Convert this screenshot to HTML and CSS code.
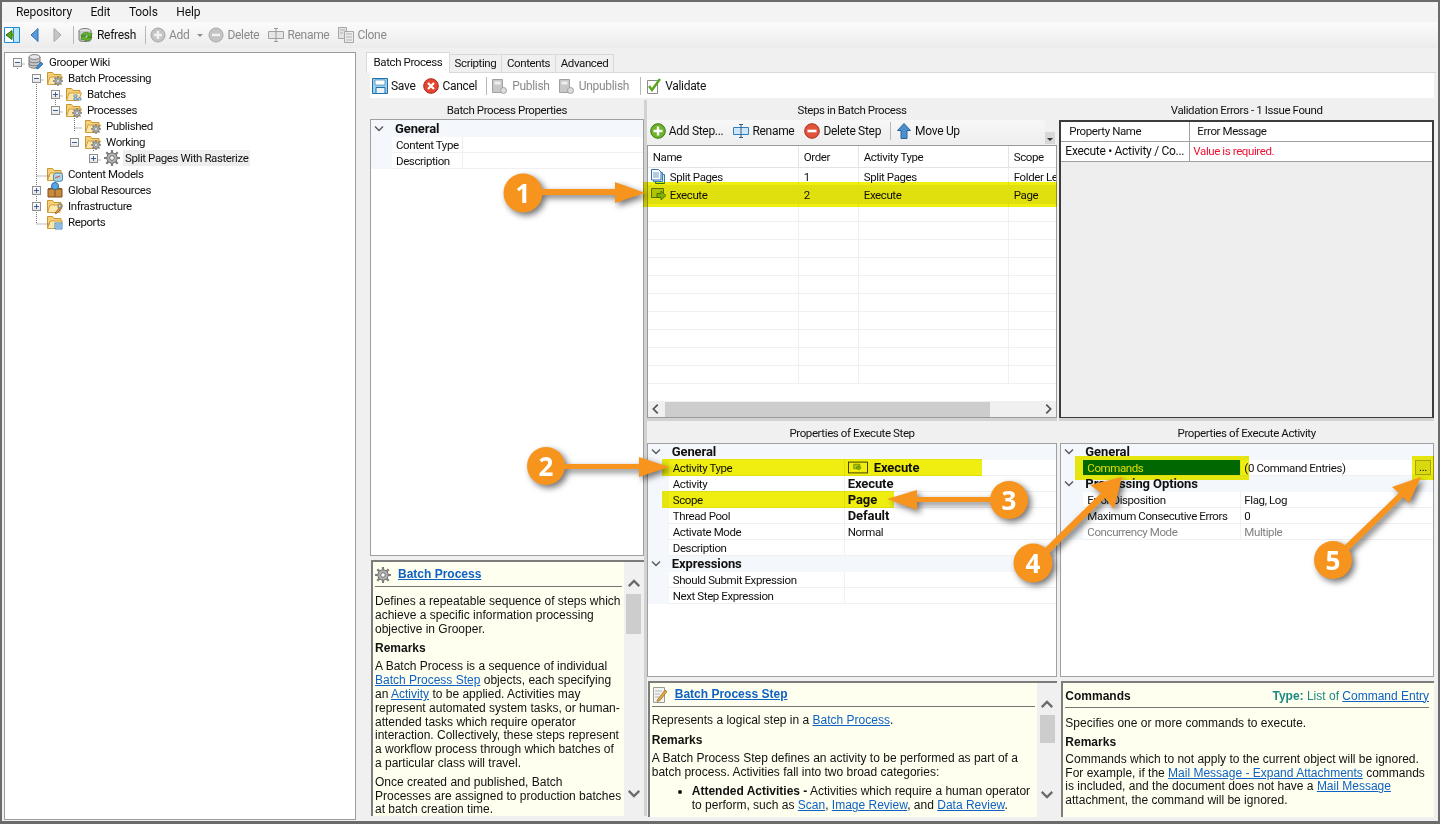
FILE: index.html
```html
<!DOCTYPE html>
<html lang="en">
<head>
<meta charset="utf-8">
<title>Grooper Design Studio</title>
<link rel="stylesheet" href="styles.css">
</head>
<body>
<svg class="defs" width="0" height="0" aria-hidden="true">
  <defs>
    <symbol id="folder" viewBox="0 0 16 16"><path d="M.5 14.500v-12h5l1.500 2h7v3" fill="#f7cf78" stroke="#c9962f"/><path d="M.5 14.500l2.500-7.500h12.500l-3 7.500z" fill="#fde7a8" stroke="#d0a040"/></symbol>
    <symbol id="gear" viewBox="0 0 16 16"><circle cx="8" cy="8" r="5.200" fill="#b4b4b4" stroke="#6f6f6f"/><path d="M8 0v3M8 13v3M0 8h3M13 8h3M2.300 2.300l2.100 2.100M11.600 11.600l2.100 2.100M13.700 2.300l-2.100 2.100M4.400 11.600l-2.100 2.100" stroke="#7d7d7d" stroke-width="2.200"/><circle cx="8" cy="8" r="2.300" fill="#fff" stroke="#6f6f6f"/></symbol>
    <symbol id="fgear" viewBox="0 0 16 16"><use href="#folder"/><use href="#gear" x="6" y="6" width="10" height="10"/></symbol>
    <symbol id="db" viewBox="0 0 16 16"><path d="M1 3v9c0 3 11 3 11 0V3z" fill="#c7c7c7" stroke="#7b7b7b"/><ellipse cx="6.500" cy="3" rx="5.500" ry="2.400" fill="#e9e9e9" stroke="#7b7b7b"/><path d="M1 6.500c0 3 11 3 11 0M1 9.500c0 3 11 3 11 0" fill="none" stroke="#7b7b7b"/><path d="M8 14l5-6 2 2-5 5z" fill="#3d8fd6" stroke="#1e5f9c" stroke-width=".7"/></symbol>
    <symbol id="fsmall" viewBox="0 0 16 16"><use href="#folder"/><path d="M8 9h3v2H8zM12 12h3v2h-3zM8 12h3v2H8z" fill="#e4eef8" stroke="#4a7fb0" stroke-width=".8"/></symbol>
    <symbol id="fmodel" viewBox="0 0 16 16"><use href="#folder"/><ellipse cx="11" cy="9" rx="4.500" ry="2" fill="#bfe0ee" stroke="#4f8fae"/><path d="M6.500 9v5c0 2 9 2 9 0V9" fill="#a9d3e6" stroke="#4f8fae"/><path d="M8 12l5-2" stroke="#d44"/></symbol>
    <symbol id="box" viewBox="0 0 16 16"><path d="M1 7l7-2 7 2v8H1z" fill="#c98a3c" stroke="#7a4f1c"/><path d="M1 7h14M8 7v8" stroke="#7a4f1c"/><circle cx="8" cy="4" r="3.500" fill="#5aa6e0" stroke="#2a6ea8"/></symbol>
    <symbol id="ftool" viewBox="0 0 16 16"><use href="#folder"/><path d="M8 15l5-6 2-1-1 3-5 5z" fill="#d99050" stroke="#8c5a28" stroke-width=".7"/><circle cx="13" cy="8" r="2" fill="none" stroke="#8f8f8f" stroke-width="1.300"/></symbol>
    <symbol id="freport" viewBox="0 0 16 16"><use href="#folder"/><path d="M8 9h7v6H8z" fill="#d9ecfa" stroke="#3f86bf"/><path d="M9 11h5M9 13h5" stroke="#3f86bf"/></symbol>
    <symbol id="plus" viewBox="0 0 16 16"><circle cx="8" cy="8" r="7" fill="#c4c4c4" stroke="#a8a8a8"/><path d="M8 4v8M4 8h8" stroke="#f2f2f2" stroke-width="2.400"/></symbol>
    <symbol id="minus" viewBox="0 0 16 16"><circle cx="8" cy="8" r="7" fill="#c4c4c4" stroke="#a8a8a8"/><path d="M4 8h8" stroke="#f2f2f2" stroke-width="2.400"/></symbol>
    <symbol id="rename" viewBox="0 0 16 16"><path d="M.5 4.500h15v7H.5z" fill="#e6e6e6" stroke="#a2a2a2"/><path d="M8 1.500v13M6 1.500h4M6 14.500h4" stroke="#9a9a9a" fill="none"/></symbol>
    <symbol id="renameb" viewBox="0 0 16 16"><path d="M.5 4.500h15v7H.5z" fill="#cfe6f8" stroke="#2f7fc0"/><path d="M8 1.500v13M6 1.500h4M6 14.500h4" stroke="#33607f" fill="none"/></symbol>
    <symbol id="pub" viewBox="0 0 16 16"><path d="M1.500 1.500h10v13h-10z" fill="#c8c8c8" stroke="#a0a0a0"/><path d="M3.500 3.500h6v3h-6z" fill="#efefef"/><circle cx="12.500" cy="12.500" r="3" fill="#dcdcdc" stroke="#a0a0a0"/></symbol>
    <symbol id="exec" viewBox="0 0 16 16"><path d="M.5 1.500h12v9H.5z" fill="#b9d15b" stroke="#5b7a1a"/><path d="M6 6.500h4V4l5 4.500-5 4.500v-2.500H6z" fill="#8dbd2a" stroke="#3d6b12" stroke-width=".8"/></symbol>
    <symbol id="pages" viewBox="0 0 16 16"><path d="M4.500 5.500h9v9h-9z" fill="#d6eef0" stroke="#33808c"/><path d="M2.500 3.500h9v9h-9z" fill="#e8f4fb" stroke="#3f7fb8"/><path d="M.5.500h7l2.500 2.500v8h-9.500z" fill="#fff" stroke="#2f6fb0"/><path d="M2 4h6M2 6h6M2 8h6" stroke="#6b9bc8"/></symbol>
    <symbol id="note" viewBox="0 0 16 16"><path d="M1.500.500h11v15h-11z" fill="#f4f4f4" stroke="#9a9a9a"/><path d="M3 4h7M3 7h5M3 10h4" stroke="#b5b5b5"/><path d="M6 12l7-9 2 1.500-7 9-3 1z" fill="#e7a93c" stroke="#8c6a20" stroke-width=".7"/></symbol>
    <symbol id="up" viewBox="0 0 16 10"><path d="M2 8l6-6 6 6" fill="none" stroke="#6a6a6a" stroke-width="2.600"/></symbol>
    <symbol id="down" viewBox="0 0 16 10"><path d="M2 2l6 6 6-6" fill="none" stroke="#6a6a6a" stroke-width="2.600"/></symbol>
    <symbol id="chev" viewBox="0 0 10 8"><path d="M1 1.500l4 4 4-4" fill="none" stroke="#595959" stroke-width="1.400"/></symbol>
  </defs>
</svg>

<div class="frame">
  <nav class="menu">
    <span class="menu-item">Repository</span>
    <span class="menu-item">Edit</span>
    <span class="menu-item">Tools</span>
    <span class="menu-item">Help</span>
  </nav>

  <div class="toolbar main-tools">
    <svg class="ico ico-nav" viewBox="0 0 16 16"><path d="M.5.500h15v15H.5z" fill="#fff" stroke="#1b8fd8"/><path d="M9.500.500h6v15h-6z" fill="#bfe3f7" stroke="#1b8fd8"/><path d="M8 3.500v9L2 8z" fill="#5aa51e" stroke="#2f6d0c"/><path d="M8 6.500h2v3H8z" fill="#5aa51e"/></svg>
    <svg class="ico nav-back" viewBox="0 0 16 16"><path d="M11 1.500v13L4 8z" fill="#5b9bdc" stroke="#2f6fae"/></svg>
    <svg class="ico nav-fwd" viewBox="0 0 16 16"><path d="M5 1.500v13L12 8z" fill="#c6c6c6" stroke="#a8a8a8"/></svg>
    <span class="sep sep-a"></span>
    <span class="tool t-refresh"><svg class="ico" viewBox="0 0 16 16"><ellipse cx="7" cy="4" rx="6" ry="2.500" fill="#e3e3e3" stroke="#7b7b7b"/><path d="M1 4v9c0 2 12 2 12 0V4" fill="#c9c9c9" stroke="#7b7b7b"/><path d="M3 9c1-4 7-5 9-2l2-1-1 5-4-1 2-1c-2-2-5-1-6 1zM14 10c-1 4-7 5-9 2l-2 1 1-5 4 1-2 1c2 2 5 1 6-1z" fill="#64b52a" stroke="#2f7a10" stroke-width=".6"/></svg>Refresh</span>
    <span class="sep sep-b"></span>
    <span class="tool off t-add"><svg class="ico" viewBox="0 0 16 16"><use href="#plus"/></svg>Add<i class="caret"></i></span>
    <span class="tool off t-del"><svg class="ico" viewBox="0 0 16 16"><use href="#minus"/></svg>Delete</span>
    <span class="tool off t-ren"><svg class="ico" viewBox="0 0 16 16"><use href="#rename"/></svg>Rename</span>
    <span class="tool off t-clone"><svg class="ico" viewBox="0 0 16 16"><path d="M.5.500h8v11h-8z" fill="#e4e4e4" stroke="#a6a6a6"/><path d="M6.500 4.500h9v11h-9z" fill="#ececec" stroke="#a6a6a6"/><path d="M2 3h5M2 6h3M8 7h6M8 10h6M8 13h6" stroke="#b0b0b0"/></svg>Clone</span>
  </div>

  <div class="main">
    <aside class="tree">
      <div class="row l0"><i class="exp minus"></i><svg class="ico"><use href="#db"/></svg><span class="lab">Grooper Wiki</span></div>
      <div class="row l1"><i class="exp minus"></i><svg class="ico"><use href="#fgear"/></svg><span class="lab">Batch Processing</span></div>
      <div class="row l2"><i class="exp plus"></i><svg class="ico"><use href="#fsmall"/></svg><span class="lab">Batches</span></div>
      <div class="row l2"><i class="exp minus"></i><svg class="ico"><use href="#fgear"/></svg><span class="lab">Processes</span></div>
      <div class="row l3"><i class="exp none"></i><svg class="ico"><use href="#fgear"/></svg><span class="lab">Published</span></div>
      <div class="row l3"><i class="exp minus"></i><svg class="ico"><use href="#fgear"/></svg><span class="lab">Working</span></div>
      <div class="row l4"><i class="exp plus"></i><svg class="ico"><use href="#gear"/></svg><span class="lab sel">Split Pages With Rasterize</span></div>
      <div class="row l1"><i class="exp none"></i><svg class="ico"><use href="#fmodel"/></svg><span class="lab">Content Models</span></div>
      <div class="row l1"><i class="exp plus"></i><svg class="ico"><use href="#box"/></svg><span class="lab">Global Resources</span></div>
      <div class="row l1"><i class="exp plus"></i><svg class="ico"><use href="#ftool"/></svg><span class="lab">Infrastructure</span></div>
      <div class="row l1"><i class="exp none"></i><svg class="ico"><use href="#freport"/></svg><span class="lab">Reports</span></div>
      <svg class="tree-lines" width="120" height="190" aria-hidden="true">
        <path d="M12.500 14v2M12.500 10h7M31.500 30v140M31.500 26h7M31.500 170h13M31.500 122h13M31.500 138h3M31.500 154h3M50.500 46v16M50.500 42h7M50.500 58h7M69.500 62v16M69.500 74h7M88.500 94v4M88.500 106h7" stroke="#777" stroke-dasharray="1 1" fill="none"/>
      </svg>
    </aside>

    <section class="work">
      <div class="tabs">
        <span class="tab active">Batch Process</span>
        <span class="tab t2">Scripting</span>
        <span class="tab t3">Contents</span>
        <span class="tab t4">Advanced</span>
      </div>
      <div class="toolbar work-tools">
        <span class="tool t-save"><svg class="ico" viewBox="0 0 16 16"><path d="M.5.500h15v15H.5z" fill="#9fd0ef" stroke="#1f6fa8"/><path d="M3 2h10v5H3z" fill="#fff" stroke="#1f6fa8" stroke-width=".6"/><path d="M4 9.500h9v6H4z" fill="#e8f3fb" stroke="#1f6fa8"/></svg>Save</span>
        <span class="tool t-cancel"><svg class="ico" viewBox="0 0 16 16"><circle cx="8" cy="8" r="7.300" fill="#e5452f" stroke="#a52a1a"/><path d="M5 5l6 6M11 5l-6 6" stroke="#fff" stroke-width="2.200"/></svg>Cancel</span>
        <span class="sep sep-c"></span>
        <span class="tool off t-pub"><svg class="ico" viewBox="0 0 16 16"><use href="#pub"/></svg>Publish</span>
        <span class="tool off t-unpub"><svg class="ico" viewBox="0 0 16 16"><use href="#pub"/></svg>Unpublish</span>
        <span class="sep sep-d"></span>
        <span class="tool t-val"><svg class="ico" viewBox="0 0 16 16"><path d="M1.500 2.500h10v13h-10z" fill="#fff" stroke="#8c8c8c"/><path d="M3 8l3 4 8-11" fill="none" stroke="#59a51e" stroke-width="2.400"/></svg>Validate</span>
      </div>

      <div class="cols">
        <div class="col col1">
          <h2 class="ttl t19">Batch Process Properties</h2>
          <div class="pg pg-a grow">
            <div class="pg-cat"><svg class="chev"><use href="#chev"/></svg><b>General</b></div>
            <div class="pg-row"><span class="gut"></span><span class="nm">Content Type</span><span class="vl"></span></div>
            <div class="pg-row"><span class="gut"></span><span class="nm">Description</span><span class="vl"></span></div>
          </div>
          <article class="help h-tall">
            <div class="help-body">
              <header class="help-head"><svg class="ico"><use href="#gear"/></svg><a class="help-title">Batch Process</a></header>
              <p>Defines a repeatable sequence of steps which achieve a specific information processing objective in Grooper.</p>
              <h3>Remarks</h3>
              <p>A Batch Process is a sequence of individual <a>Batch Process Step</a> objects, each specifying an <a>Activity</a> to be applied. Activities may represent automated system tasks, or human-attended tasks which require operator interaction. Collectively, these steps represent a workflow process through which batches of a particular class will travel.</p>
              <p>Once created and published, Batch Processes are assigned to production batches at batch creation time.</p>
            </div>
            <div class="vbar"><svg class="sb-arrow"><use href="#up"/></svg><span class="thumb th-tall"></span><svg class="sb-arrow sb-down"><use href="#down"/></svg></div>
          </article>
        </div>

        <div class="vsplit"></div>

        <div class="col col2">
          <h2 class="ttl">Steps in Batch Process</h2>
          <div class="toolbar steps-tools">
            <span class="tool t-addstep"><svg class="ico" viewBox="0 0 16 16"><circle cx="8" cy="8" r="7.300" fill="#6db42a" stroke="#3d7a12"/><path d="M8 3.500v9M3.500 8h9" stroke="#fff" stroke-width="2.400"/></svg>Add Step...</span>
            <span class="tool t-rename"><svg class="ico" viewBox="0 0 16 16"><use href="#renameb"/></svg>Rename</span>
            <span class="tool t-delstep"><svg class="ico" viewBox="0 0 16 16"><circle cx="8" cy="8" r="7.300" fill="#e2533c" stroke="#a83020"/><path d="M3.500 8h9" stroke="#fff" stroke-width="2.600"/></svg>Delete Step</span>
            <span class="sep sep-e"></span>
            <span class="tool t-move"><svg class="ico" viewBox="0 0 16 16"><path d="M8 .500l6.500 7H11v8H5v-8H1.500z" fill="#4a90cf" stroke="#2a6296"/></svg>Move Up</span>
            <span class="overflow"><i></i></span>
          </div>
          <div class="list">
            <div class="lrow lhead"><span class="c1">Name</span><span class="c2">Order</span><span class="c3">Activity Type</span><span class="c4">Scope</span></div>
            <div class="lrow"><span class="c1"><svg class="ico"><use href="#pages"/></svg>Split Pages</span><span class="c2">1</span><span class="c3">Split Pages</span><span class="c4">Folder Le</span></div>
            <div class="lrow lsel"><span class="c1"><svg class="ico"><use href="#exec"/></svg>Execute</span><span class="c2">2</span><span class="c3">Execute</span><span class="c4">Page</span></div>
            <div class="lrow"><span class="c1"></span><span class="c2"></span><span class="c3"></span><span class="c4"></span></div>
            <div class="lrow"><span class="c1"></span><span class="c2"></span><span class="c3"></span><span class="c4"></span></div>
            <div class="lrow"><span class="c1"></span><span class="c2"></span><span class="c3"></span><span class="c4"></span></div>
            <div class="lrow"><span class="c1"></span><span class="c2"></span><span class="c3"></span><span class="c4"></span></div>
            <div class="lrow"><span class="c1"></span><span class="c2"></span><span class="c3"></span><span class="c4"></span></div>
            <div class="lrow"><span class="c1"></span><span class="c2"></span><span class="c3"></span><span class="c4"></span></div>
            <div class="lrow"><span class="c1"></span><span class="c2"></span><span class="c3"></span><span class="c4"></span></div>
            <div class="lrow"><span class="c1"></span><span class="c2"></span><span class="c3"></span><span class="c4"></span></div>
            <div class="lrow"><span class="c1"></span><span class="c2"></span><span class="c3"></span><span class="c4"></span></div>
            <div class="lrow"><span class="c1"></span><span class="c2"></span><span class="c3"></span><span class="c4"></span></div>
            <div class="hbar"><svg class="ha" viewBox="0 0 16 16"><path d="M10 3L5 8l5 5" fill="none" stroke="#555" stroke-width="2"/></svg><span class="hthumb"></span><svg class="ha ha-end" viewBox="0 0 16 16"><path d="M6 3l5 5-5 5" fill="none" stroke="#555" stroke-width="2"/></svg></div>
          </div>
          <h2 class="ttl tsplit">Properties of Execute Step</h2>
          <div class="pg pg-b">
            <div class="pg-cat"><svg class="chev"><use href="#chev"/></svg><b>General</b></div>
            <div class="pg-row"><span class="gut"></span><span class="nm">Activity Type</span><span class="vl bold"><svg class="swatch" viewBox="0 0 24 14"><rect x=".5" y=".5" width="23" height="13" fill="none" stroke="#222"/><use href="#exec" x="6" y="2" width="11" height="10"/></svg>Execute</span></div>
            <div class="pg-row"><span class="gut"></span><span class="nm">Activity</span><span class="vl bold">Execute</span></div>
            <div class="pg-row"><span class="gut"></span><span class="nm">Scope</span><span class="vl bold">Page</span></div>
            <div class="pg-row"><span class="gut"></span><span class="nm">Thread Pool</span><span class="vl bold">Default</span></div>
            <div class="pg-row"><span class="gut"></span><span class="nm">Activate Mode</span><span class="vl">Normal</span></div>
            <div class="pg-row"><span class="gut"></span><span class="nm">Description</span><span class="vl"></span></div>
            <div class="pg-cat"><svg class="chev"><use href="#chev"/></svg><b>Expressions</b></div>
            <div class="pg-row"><span class="gut"></span><span class="nm">Should Submit Expression</span><span class="vl"></span></div>
            <div class="pg-row"><span class="gut"></span><span class="nm">Next Step Expression</span><span class="vl"></span></div>
          </div>
          <article class="help h-short">
            <div class="help-body">
              <header class="help-head"><svg class="ico"><use href="#note"/></svg><a class="help-title">Batch Process Step</a></header>
              <p>Represents a logical step in a <a>Batch Process</a>.</p>
              <h3>Remarks</h3>
              <p>A Batch Process Step defines an activity to be performed as part of a batch process. Activities fall into two broad categories:</p>
              <ul><li><b>Attended Activities -</b> Activities which require a human operator to perform, such as <a>Scan</a>, <a>Image Review</a>, and <a>Data Review</a>.</li></ul>
            </div>
            <div class="vbar"><svg class="sb-arrow"><use href="#up"/></svg><span class="thumb th-short"></span><svg class="sb-arrow sb-down"><use href="#down"/></svg></div>
          </article>
        </div>

        <div class="col col3">
          <h2 class="ttl">Validation Errors - 1 Issue Found</h2>
          <div class="errors">
            <div class="erow ehead"><span class="e1 epad">Property Name</span><span class="e2 epad">Error Message</span></div>
            <div class="erow"><span class="e1 e1-val">Execute • Activity / Co...</span><span class="e2 err">Value is required.</span></div>
          </div>
          <h2 class="ttl tsplit">Properties of Execute Activity</h2>
          <div class="pg pg-c">
            <div class="pg-cat"><svg class="chev"><use href="#chev"/></svg><b>General</b></div>
            <div class="pg-row"><span class="gut"></span><span class="nm nm-sel">Commands</span><span class="vl vl-btn">(0 Command Entries)<i class="dots">...</i></span></div>
            <div class="pg-cat"><svg class="chev"><use href="#chev"/></svg><b>Processing Options</b></div>
            <div class="pg-row"><span class="gut"></span><span class="nm">Error Disposition</span><span class="vl">Flag, Log</span></div>
            <div class="pg-row"><span class="gut"></span><span class="nm">Maximum Consecutive Errors</span><span class="vl">0</span></div>
            <div class="pg-row dim"><span class="gut"></span><span class="nm">Concurrency Mode</span><span class="vl">Multiple</span></div>
          </div>
          <article class="help h-short">
            <div class="help-body h-cmd">
              <header class="help-head cmd-head"><b>Commands</b><span class="type"><b>Type:</b> List of <a>Command Entry</a></span></header>
              <p>Specifies one or more commands to execute.</p>
              <h3>Remarks</h3>
              <p>Commands which to not apply to the current object will be ignored. For example, if the <a>Mail Message - Expand Attachments</a> commands is included, and the document does not have a <a>Mail Message</a> attachment, the command will be ignored.</p>
            </div>
          </article>
        </div>
      </div>
    </section>
  </div>
</div>

<div class="hl hl-1"></div>
<div class="hl hl-2"></div>
<div class="hl hl-3"></div>
<div class="hl hl-4"></div>
<div class="hl hl-5"></div>

<svg class="annot" width="1440" height="824" viewBox="0 0 1440 824" aria-hidden="true">
  <g class="arrow">
    <path d="M538 189H615V182L645 193 615 203V195H538z"/>
    <circle cx="523" cy="193" r="19.500"/>
  </g>
  <text class="num" x="523" y="203">1</text>
  <g class="arrow">
    <path d="M560 464H639V457L669 467 639 477V469H560z"/>
    <circle cx="546" cy="466" r="19"/>
  </g>
  <text class="num" x="546" y="476">2</text>
  <g class="arrow">
    <path d="M995 497H917V490L887 499 917 510V502H995z"/>
    <circle cx="1009" cy="500" r="19"/>
  </g>
  <text class="num" x="1009" y="510">3</text>
  <g class="arrow">
    <path d="M1044 549L1101 493 1090 485 1122 477 1114 509 1105 498 1048 554z"/>
    <circle cx="1033" cy="563" r="19.500"/>
  </g>
  <text class="num" x="1033" y="573">4</text>
  <g class="arrow">
    <path d="M1344 546L1399 493 1392 487 1421 477 1409 503 1403 497 1348 551z"/>
    <circle cx="1333" cy="560" r="19"/>
  </g>
  <text class="num" x="1333" y="570">5</text>
</svg>
</body>
</html>
```
FILE: styles.css
```css
* { box-sizing: border-box; }
html, body { margin: 0; padding: 0; }
body {
  position: relative;
  width: 1440px;
  height: 824px;
  overflow: hidden;
  font: 12px/16px Roboto, "Liberation Sans", sans-serif;
  letter-spacing: -.3px;
  color: #111;
  background: #f0f0f0;
}
.defs { position: absolute; }
.frame {
  width: 1440px;
  height: 824px;
  border: 2px solid #6b6b6b;
  border-bottom-width: 3px;
  display: flex;
  flex-direction: column;
  background: #f0f0f0;
}
.ico { width: 16px; height: 16px; flex: none; display: block; }
.tree, .ttl, .pg, .list, .errors, .tabs { font-size: 11.5px; letter-spacing: -.4px; }

/* menu */
.menu { height: 20px; display: flex; align-items: center; padding-left: 14px; gap: 18.500px; background: #f3f3f3; letter-spacing: -.1px; }

/* toolbars */
.toolbar { display: flex; align-items: center; }
.tool { display: flex; align-items: center; gap: 3px; white-space: nowrap; }
.tool.off { color: #8a8a8a; }
.sep { width: 1px; height: 18px; background: #b8b8b8; flex: none; }
.main-tools { height: 26px; padding-left: 2px; background: linear-gradient(#fbfbfb, #ececec); }
.nav-back { margin-left: 7px; }
.nav-fwd { margin-left: 6px; }
.sep-a { margin-left: 8px; }
.t-refresh { margin-left: 4px; }
.sep-b { margin-left: 9px; }
.t-add { margin-left: 4px; }
.caret { width: 0; height: 0; border: 3px solid transparent; border-top: 3px solid #8f8f8f; border-bottom: 0; margin-left: 5px; }
.t-del { margin-left: 5px; }
.t-ren { margin-left: 9px; }
.t-clone { margin-left: 9px; }

/* layout */
.main { flex: 1; display: flex; min-height: 0; padding: 2px 0 0 2px; }
.tree {
  position: relative;
  width: 352px;
  height: 768px;
  margin-top: 2px;
  border: 1px solid #9c9c9c;
  background: #fff;
  padding: 1px 0 0 8px;
}
.work { margin-left: 10px; width: 1070px; display: flex; flex-direction: column; }

/* tree */
.row { height: 16px; display: flex; align-items: center; white-space: nowrap; }
.l1 { padding-left: 19px; }
.l2 { padding-left: 38px; }
.l3 { padding-left: 57px; }
.l4 { padding-left: 76px; }
.exp { width: 9px; height: 9px; flex: none; margin-right: 6px; position: relative; background: #fff; z-index: 1; }
.exp.minus, .exp.plus { border: 1px solid #8e8e8e; background: linear-gradient(#fff, #e4e4e4); }
.exp.none { background: transparent; }
.exp.minus::before, .exp.plus::before { content: ""; position: absolute; left: 1px; top: 3px; width: 5px; height: 1px; background: #3a5f9c; }
.exp.plus::after { content: ""; position: absolute; left: 3px; top: 1px; width: 1px; height: 5px; background: #3a5f9c; }
.lab { margin-left: 5px; }
.lab.sel { background: #eee; padding: 0 2px; margin-left: 3px; }
.tree-lines { position: absolute; left: 0; top: 1px; pointer-events: none; }

/* tabs */
.tabs { display: flex; align-items: flex-end; height: 23px; border-bottom: 1px solid #d9d9d9; }
.tab { height: 18px; padding: 0 2px; line-height: 17px; background: #f0f0f0; border: 1px solid #d9d9d9; border-left: 0; border-bottom: 0; text-align: center; white-space: nowrap; }
.tab.active { height: 21px; width: 84px; margin-bottom: -1px; background: #fff; border-left: 1px solid #d9d9d9; line-height: 18px; }
.t2 { width: 52px; }
.t3 { width: 54px; }
.t4 { width: 58px; }
.work-tools { height: 25px; margin: 0 2px 0 4px; background: #fff; padding-left: 2px; }
.t-cancel { margin-left: 8px; }
.sep-c { margin-left: 9px; }
.t-pub { margin-left: 4px; gap: 5px; }
.t-unpub { margin-left: 8px; gap: 5px; }
.sep-d { margin-left: 11px; }
.t-val { margin-left: 5px; }

/* columns */
.cols { height: 716px; margin: 2px 2px 0 4px; display: flex; }
.col { display: flex; flex-direction: column; min-width: 0; }
.col1 { width: 274px; }
.col2 { width: 411px; }
.col3 { width: 375px; margin-left: 2px; }
.vsplit { width: 3px; background: #d2d2d2; }
.ttl { margin: 0; height: 20px; line-height: 20px; font-weight: 400; text-align: center; flex: none; }
.ttl.t19 { height: 19px; }
.ttl.tsplit { height: 25px; line-height: 24px; border-top: 3px solid #d2d2d2; }

/* property grids */
.pg { border: 1px solid #a0a0a0; background: #fff; flex: none; height: 234px; overflow: hidden; }
.pg.grow { height: 437px; }
.pg-a { --gut: 21px; --name: 71px; }
.pg-a .pg-cat { height: 17px; }
.pg-b { --gut: 21px; --name: 176px; }
.pg-c { --gut: 22px; --name: 158px; margin-left: 1px; }
.pg-cat { height: 16px; display: flex; align-items: center; background: #f4f7fc; }
.pg-cat b { padding-left: 3px; font-size: 13px; letter-spacing: -.1px; }
.chev { width: 10px; height: 8px; margin: 0 8px 0 3px; flex: none; }
.pg-row { height: 16px; display: flex; }
.gut { width: var(--gut); background: #f4f7fc; flex: none; }
.nm { width: var(--name); flex: none; padding-left: 4px; border-bottom: 1px solid #f0f0f0; border-right: 1px solid #f0f0f0; white-space: nowrap; overflow: hidden; line-height: 16px; }
.vl { flex: 1; padding-left: 3px; border-bottom: 1px solid #f0f0f0; white-space: nowrap; line-height: 16px; display: flex; align-items: center; }
.vl.bold { font-weight: 700; font-size: 13px; letter-spacing: -.1px; }
.swatch { width: 20px; height: 13px; margin-right: 6px; flex: none; }
.dim { color: #808080; }
.nm-sel { background: #006e0e; color: #f0ee10; }
.vl-btn { justify-content: space-between; padding-right: 2px; }
.dots { font-style: normal; width: 16px; height: 15px; background: #e8e8e8; border: 1px solid #b0b0b0; line-height: 13px; text-align: center; }

/* list */
.steps-tools { height: 24px; flex: none; padding: 0 0 2px 3px; background: linear-gradient(#f7f7f7, #eee); margin-right: 12px; position: relative; border-radius: 0 4px 4px 0; }
.t-rename { margin-left: 10px; }
.t-delstep { margin-left: 10px; }
.sep-e { margin-left: 9px; }
.t-move { margin-left: 5px; }
.overflow { position: absolute; right: -10px; bottom: 0; width: 10px; height: 12px; background: #d8d8d8; }
.overflow i { position: absolute; left: 2px; top: 6px; border: 3px solid transparent; border-top-color: #333; border-bottom: 0; }
.list { border: 1px solid #9a9a9a; margin-top: 1px; height: 273px; background: #fff; position: relative; overflow: hidden; flex: none; }
.lrow { height: 18px; display: flex; }
.lrow span { border-right: 1px solid #f0f0f0; border-bottom: 1px solid #f0f0f0; padding-left: 5px; white-space: nowrap; overflow: hidden; display: flex; align-items: center; flex: none; line-height: 16px; }
.lhead { height: 22px; }
.lhead span { border-color: #e4e4e4; }
.lsel { background: #f0f0f0; }
.c1 { width: 151px; }
.c1 .ico { margin-right: 3px; margin-left: -2px; }
.c2 { width: 60px; }
.c3 { width: 150px; }
.c4 { width: 48px; border-right: 0 !important; }
.hbar { position: absolute; left: 0; right: 0; bottom: 0; height: 16px; background: #f0f0f0; display: flex; align-items: center; }
.ha { width: 16px; height: 14px; flex: none; }
.hthumb { width: 325px; height: 15px; margin-left: 1px; background: #cdcdcd; }
.ha-end { margin-left: auto; }

/* errors */
.errors { height: 298px; flex: none; border: 2px solid #3c3c3c; border-bottom-width: 1px; background: #eee; }
.erow { display: flex; height: 20px; background: #fff; border-bottom: 1px solid #a0a0a0; }
.e1 { width: 129px; padding-left: 4px; border-right: 1px solid #a0a0a0; white-space: nowrap; overflow: hidden; line-height: 19px; flex: none; }
.e1-val { font-size: 12px; letter-spacing: -.3px; }
.e2 { flex: 1; padding-left: 3px; line-height: 19px; }
.e1.epad { padding-left: 8px; }
.e2.epad { padding-left: 7px; }
.err { color: #ee1133; }

/* help */
.help { flex: none; margin: 4px 0 0 1px; background: #fffff0; border-top: 2px solid #7c7c7c; border-left: 2px solid #7c7c7c; display: flex; overflow: hidden; font: 12px/13.8px "Liberation Sans", Arial, sans-serif; letter-spacing: 0; }
.h-tall { height: 256px; }
.h-short { height: 136px; }
.col3 .help { margin-left: 2px; }
.help-body { flex: 1; min-width: 0; padding: 3px 2px 0 2px; overflow: hidden; }
.help-head { display: flex; align-items: center; gap: 7px; height: 22px; border-bottom: 1px solid #777; margin-bottom: 8px; padding-bottom: 2px; }
.help-title { font-weight: 700; }
.help a { color: #0f62c4; text-decoration: underline; }
.help p { margin: 0 0 5px; }
.help h3 { margin: 0 0 5px; font-size: 12px; padding-top: 6px; line-height: 14px; }
.help p + h3 { padding-top: 0; margin-top: 0; }
.help ul { margin: 6px 0 0; padding-left: 40px; }
.col2 .help-body { padding-top: 2px; }
.col2 .help-head { margin-bottom: 7px; }
.h-cmd { padding: 5px 5px 0 2px; }
.cmd-head { justify-content: space-between; height: 20px; margin-bottom: 9px; }
.h-cmd p { margin-bottom: 4px; }
.h-cmd p + h3 { margin-bottom: 4px; }
.type { color: #1c8a80; }
.vbar { width: 20px; flex: none; background: #f0f0f0; position: relative; display: flex; flex-direction: column; align-items: center; }
.sb-arrow { width: 14px; height: 9px; margin-top: 17px; flex: none; }
.thumb { width: 15px; background: #cdcdcd; margin-top: 6px; flex: none; }
.th-tall { height: 40px; }
.th-short { height: 28px; }
.sb-down { margin-top: auto; margin-bottom: 18px; }

/* highlights & annotations */
.hl { position: absolute; background: #f0ee10; mix-blend-mode: multiply; }
.hl-1 { left: 643px; top: 182px; width: 414px; height: 25px; }
.hl-2 { left: 662px; top: 459px; width: 320px; height: 17px; }
.hl-3 { left: 662px; top: 491px; width: 232px; height: 17px; }
.hl-4 { left: 1075px; top: 456px; width: 174px; height: 24px; }
.hl-5 { left: 1412px; top: 456px; width: 22px; height: 24px; }
.annot { position: absolute; left: 0; top: 0; pointer-events: none; }
.arrow { fill: #f7941e; filter: drop-shadow(3px 3px 3px rgba(0,0,0,.55)); }
.num { font: 700 26px "Open Sans", "Liberation Sans", sans-serif; fill: #fff; text-anchor: middle; letter-spacing: 0; }
```
